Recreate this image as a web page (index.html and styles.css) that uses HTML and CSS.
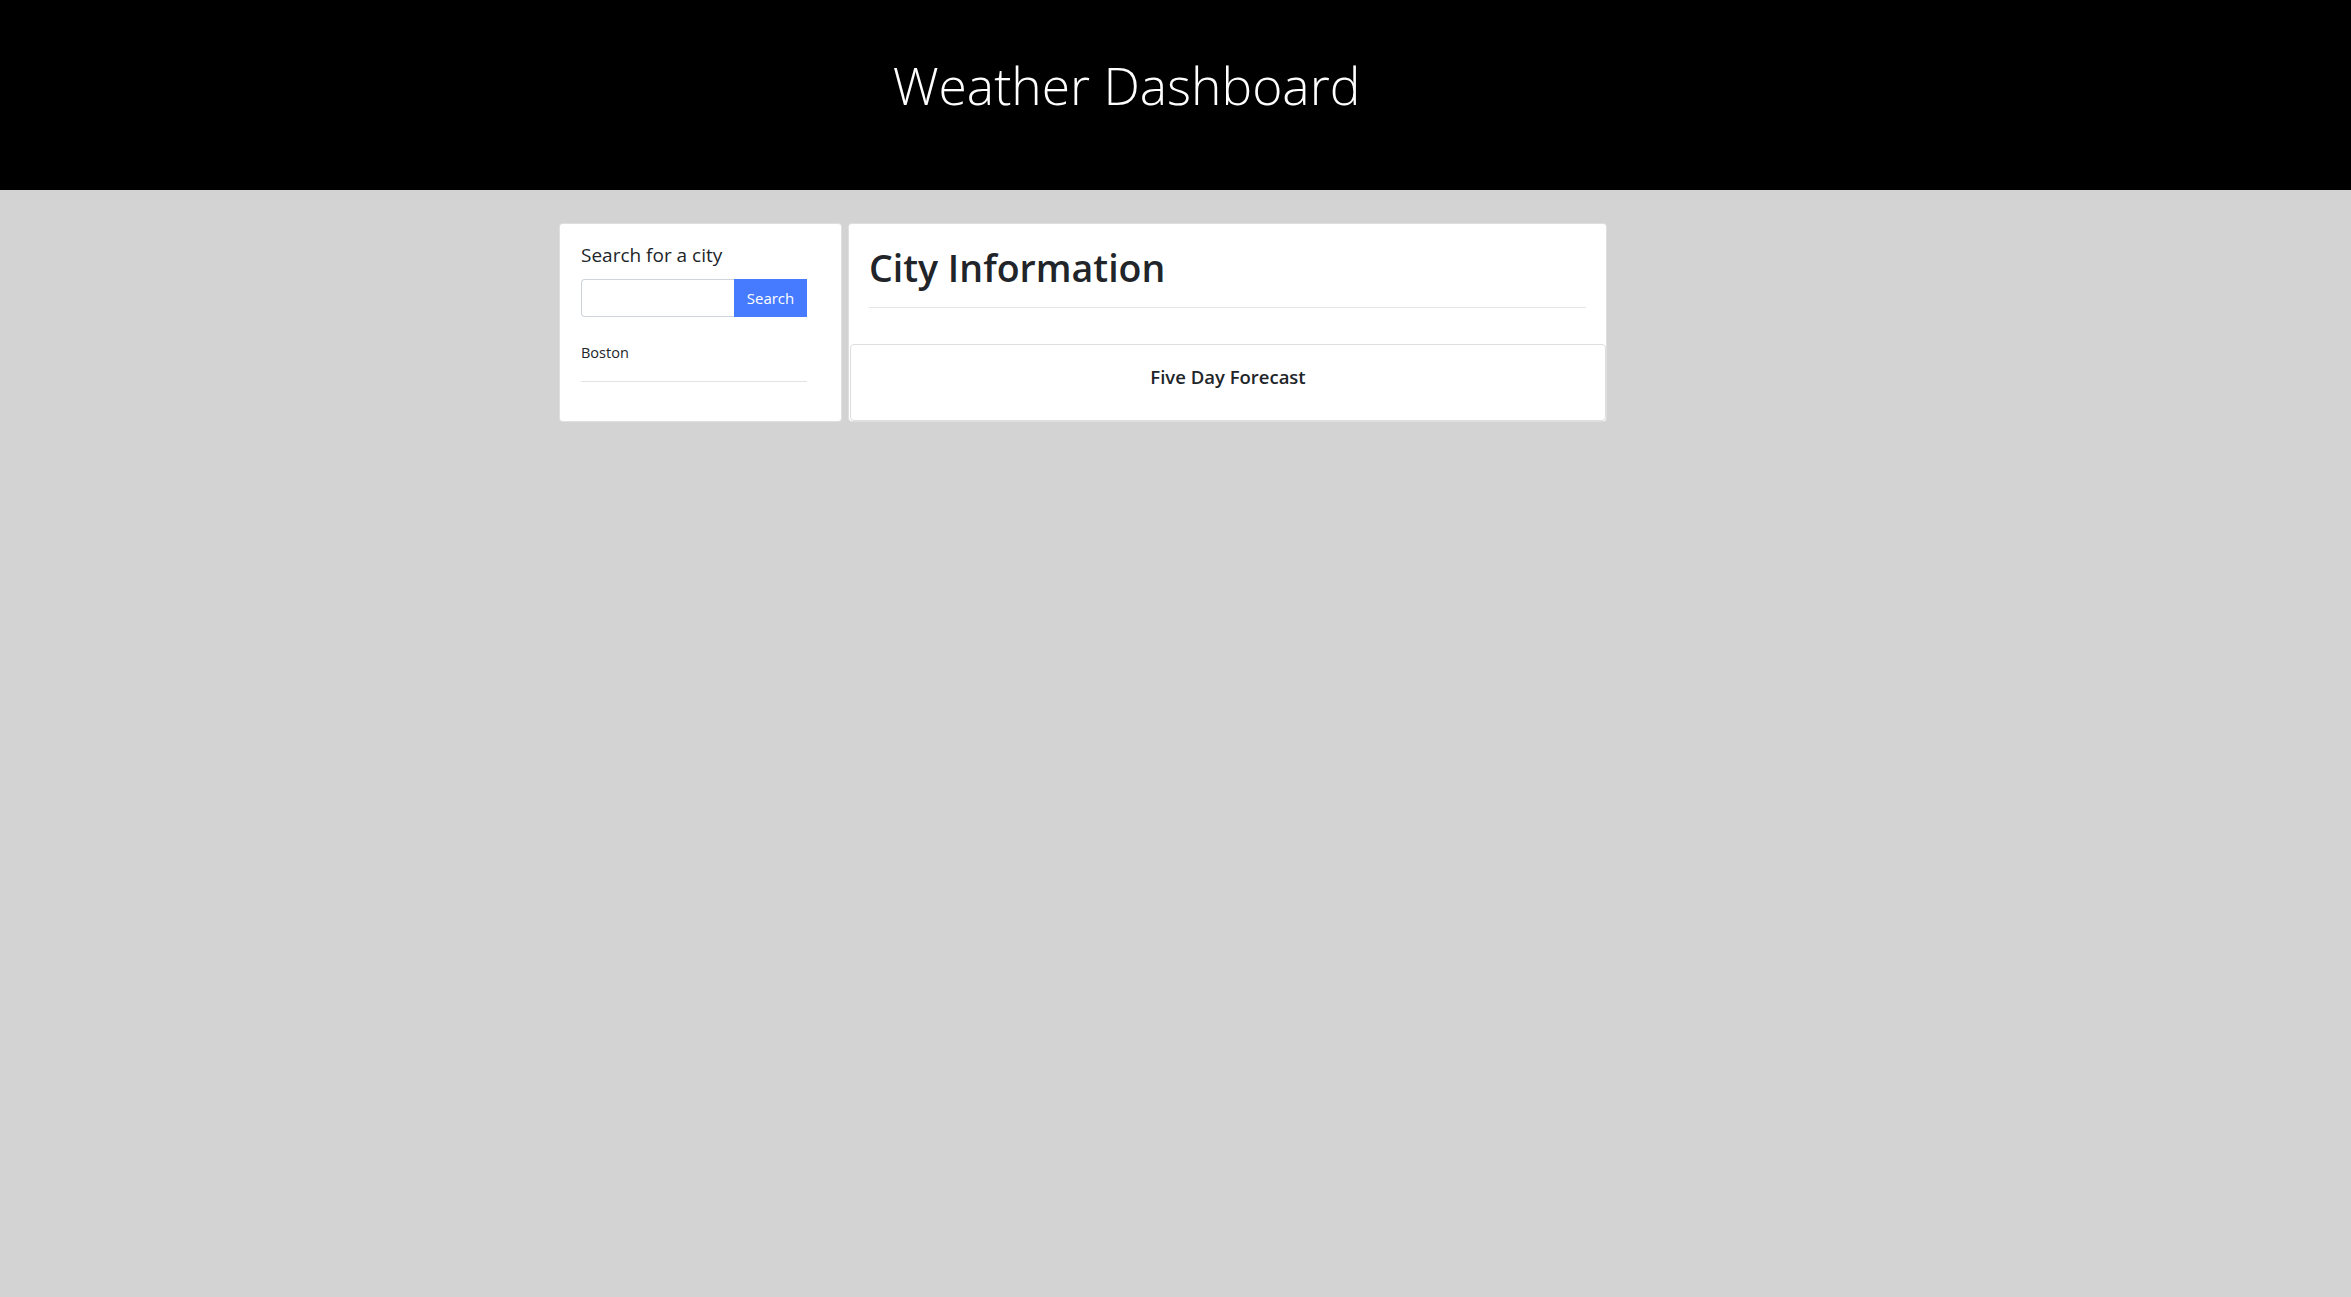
FILE: index.html
```html
<!DOCTYPE html>
<html lang="en">
<head>
<meta charset="utf-8">
<title>Weather Dashboard</title>
<link rel="stylesheet" href="styles.css">
</head>
<body>
<header class="hero">
  <h1 class="hero-title">Weather Dashboard</h1>
</header>
<main class="dashboard">
  <section class="card search-card">
    <h5 class="card-heading">Search for a city</h5>
    <form class="input-group" onsubmit="return false">
      <input class="city-input" type="text" aria-label="City">
      <button class="search-btn" type="submit">Search</button>
    </form>
    <ul class="history">
      <li class="history-item">Boston</li>
    </ul>
  </section>
  <section class="card info-card">
    <div class="info-body">
      <h1 class="info-title">City Information</h1>
      <hr class="divider">
    </div>
    <div class="forecast-card">
      <h5 class="forecast-title">Five Day Forecast</h5>
    </div>
  </section>
</main>
</body>
</html>
```

FILE: styles.css
```css
* {
  box-sizing: border-box;
}

html, body {
  margin: 0;
  padding: 0;
}

body {
  background: #d3d3d3;
  font-family: "Open Sans", "Noto Sans", sans-serif;
  color: #212529;
  min-height: 1297px;
}

.hero {
  background: #000;
  height: 190px;
  padding: 55px 98px 0 0;
}

.hero-title {
  margin: 0;
  text-align: center;
  color: #fff;
  font-weight: 300;
  font-size: 51.5px;
  line-height: 1.2;
}

.dashboard {
  display: flex;
  align-items: stretch;
  gap: 6px;
  padding: 33px 0 0 559px;
}

.card {
  background: #fff;
  border: 1px solid rgba(0, 0, 0, 0.125);
  border-radius: 4px;
}

.search-card {
  width: 283px;
  padding: 19px 34px 20px 21px;
}

.card-heading {
  margin: 0 0 12px;
  font-size: 19px;
  font-weight: 500;
  line-height: 24px;
}

.input-group {
  display: flex;
  height: 38px;
}

.city-input {
  flex: 1;
  min-width: 0;
  border: 1px solid #ced4da;
  border-right: none;
  border-radius: 4px 0 0 4px;
  background: #fff;
  font: inherit;
  padding: 0 12px;
  outline: none;
}

.search-btn {
  width: 73px;
  border: none;
  border-radius: 0;
  background: #477bff;
  color: #fff;
  font-family: inherit;
  font-size: 15px;
  padding: 0;
}

.history {
  list-style: none;
  margin: 12px 0 0;
  padding: 0;
}

.history-item {
  padding: 13px 0 16px;
  font-size: 14.5px;
  line-height: 22.5px;
  border-bottom: 1px solid #e2e3e5;
}

.info-card {
  width: 759px;
  display: flex;
  flex-direction: column;
}

.info-body {
  padding: 20px 20px 20px;
}

.info-title {
  margin: 0;
  font-size: 37.5px;
  font-weight: 600;
  line-height: 48px;
}

.divider {
  margin: 15px 0 0;
  border: 0;
  border-top: 1px solid #e6e6e6;
}

.forecast-card {
  margin: 16px 0 0 1px;
  border: 1px solid #dedede;
  border-radius: 4px;
  padding: 20px 20px 31px;
  text-align: center;
}

.forecast-title {
  margin: 0;
  font-size: 18.5px;
  font-weight: 600;
  line-height: 24px;
}
```
